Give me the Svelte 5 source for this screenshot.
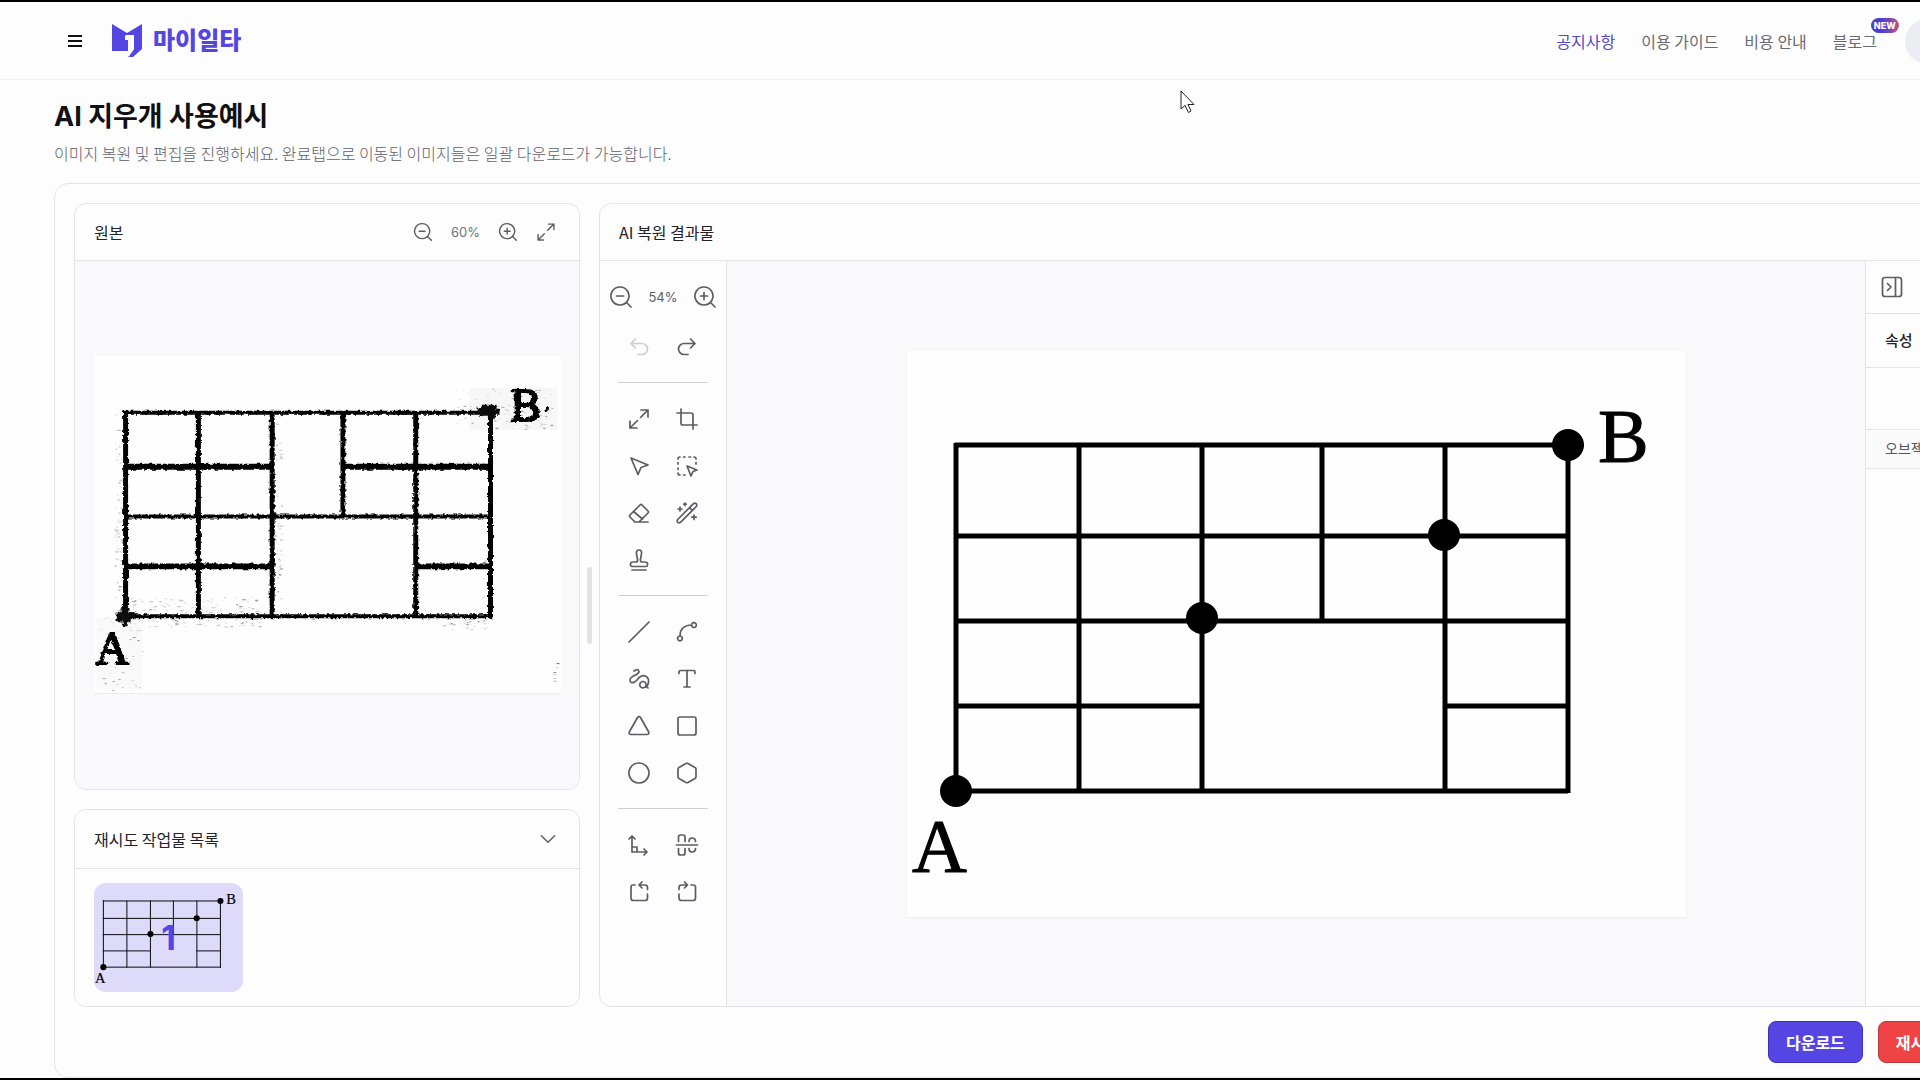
<script lang="ts">
	type Tool = { name: string; paths: string; label: string; disabled?: boolean };

	let sourceZoom = $state(60);
	let resultZoom = $state(54);
	let activeTool = $state('');

	const tools: (Tool | null)[][] = [
		[
			{
				name: 'undo',
				label: '실행 취소',
				disabled: true,
				paths: 'M8.5 4 L4 8.5 L8.5 13 M4 8.5 H15 A5 5 0 0 1 15 19.5 H11'
			},
			{
				name: 'redo',
				label: '다시 실행',
				paths: 'M15.5 4 L20 8.5 L15.5 13 M20 8.5 H9 A5 5 0 0 0 9 19.5 H13'
			}
		],
		[
			{ name: 'resize', label: '크기 조절', paths: 'M14 3 H21 V10 M21 3 L13.5 10.5 M3 14 V21 H10 M3 21 L10.5 13.5' },
			{ name: 'crop', label: '자르기', paths: 'M6 2 V16 Q6 18 8 18 H22 M2 6 H16 Q18 6 18 8 V22' },
			{ name: 'select', label: '선택', paths: 'M4 4 L21 11 L14 13.5 L11 20.5 Z' },
			{
				name: 'area',
				label: '영역 선택',
				paths:
					'M3 5 Q3 3 5 3 M8.5 3 H10 M14 3 H15.5 M19 3 Q21 3 21 5 M21 8.5 V10 M3 8.5 V10 M3 14 V15.5 M3 19 Q3 21 5 21 M8.5 21 H10 M12 12 L22 16 L18 17.5 L16 22 Z'
			},
			{
				name: 'eraser',
				label: '지우개',
				paths: 'M8 21 L3 16 Q2 15 3 14 L13 4 Q14 3 15 4 L21 10 Q22 11 21 12 L12 21 H7.5 M12 21 H21 M6.5 10.5 L15.5 18'
			},
			{
				name: 'wand',
				label: '요술봉',
				paths:
					'M2.7 18.5 L18.5 2.7 Q20 1.7 21.3 2.7 Q22.3 4 21.3 5.5 L5.5 21.3 Q4 22.3 2.7 21.3 Q1.7 20 2.7 18.5 M14.5 6.7 L17.3 9.5 M5 6 V10 M3 8 H7 M10 2 V4.5 M8.8 3.2 H11.2 M19 14 V18.5 M16.8 16.2 H21.2'
			},
			{
				name: 'stamp',
				label: '도장',
				paths:
					'M5 22 H19 M5 18.5 Q3.5 18.5 3.5 17 V16 Q3.5 14 6 14 H9 Q11 14 10.5 11 L9.5 6 Q9 2 12 2 Q15 2 14.5 6 L13.5 11 Q13 14 15 14 H18 Q20.5 14 20.5 16 V17 Q20.5 18.5 19 18.5 Z'
			},
			null
		],
		[
			{ name: 'line', label: '직선', paths: 'M2 22 L22 2' },
			{
				name: 'curve',
				label: '곡선',
				paths: 'M5 16 Q5 5.5 16.5 5 M5 16 A2.4 2.4 0 1 1 4.9 16 M19 2.7 A2.4 2.4 0 1 1 18.9 2.7'
			},
			{
				name: 'free',
				label: '자유곡선',
				paths:
					'M7 4 Q11 1 12 4.5 C12.5 8 3 8.5 3 13 C3 17 7.5 16 10 13 C13 8.5 17 7.5 20 10 C23 13 21.5 20 17 20.5 M16 14.5 A3.2 3.2 0 1 1 15.9 14.5 M20 20 L21 21'
			},
			{ name: 'text', label: '텍스트', paths: 'M4 6.5 V5 Q4 3.5 5.5 3.5 H18.5 Q20 3.5 20 5 V6.5 M12 3.5 V20 M9 20 H15' },
			{ name: 'triangle', label: '삼각형', paths: 'M10.5 3.5 Q12 1.8 13.5 3.5 L21.7 18 Q22.4 20.5 20 20.5 H4 Q1.6 20.5 2.3 18 Z' },
			{ name: 'rect', label: '사각형', paths: 'M5 3 H19 Q21 3 21 5 V19 Q21 21 19 21 H5 Q3 21 3 19 V5 Q3 3 5 3' },
			{ name: 'circle', label: '원', paths: 'M12 2 A10 10 0 1 1 11.9 2' },
			{ name: 'hexagon', label: '육각형', paths: 'M11 2.5 Q12 2 13 2.5 L20 6.5 Q21 7 21 8 V16 Q21 17 20 17.5 L13 21.5 Q12 22 11 21.5 L4 17.5 Q3 17 3 16 V8 Q3 7 4 6.5 Z' }
		],
		[
			{ name: 'axis', label: '직각', paths: 'M5 3 V19 H20 M2 6 L5 3 L8 6 M17 16 L20 19 L17 22 M5 14 H10 V19' },
			{
				name: 'mirror',
				label: '대칭',
				paths:
					'M1.5 12 H22.5 M3.5 8.5 V4 Q3.5 2 5.5 2 H8 Q10 2 10 4 V8.5 M14 8.5 Q14 5 17 5 Q20.5 5 20.5 8.5 M3.5 15.5 V20 Q3.5 22 5.5 22 H8 Q10 22 10 20 V15.5 M14 15.5 Q14 19 17 19 Q20.5 19 20.5 15.5'
			},
			{
				name: 'rotate-left',
				label: '왼쪽 회전',
				paths: 'M8 5 H6 Q4 5 4 7 V18 Q4 20.5 6.5 20.5 H18 Q20.5 20.5 20.5 18 V14 M12 5 H18 Q20.5 5 20.5 7.5 V9.5 M15 2 L12 5 L15 8'
			},
			{
				name: 'rotate-right',
				label: '오른쪽 회전',
				paths: 'M16 5 H18 Q20.5 5 20.5 7 V18 Q20.5 20.5 18 20.5 H6.5 Q4 20.5 4 18 V14 M12 5 H6.5 Q4 5 4 7.5 V9.5 M9.5 2 L12.5 5 L9.5 8'
			}
		]
	];

	const gridLines =
		'M48 94 H661 M48 185 H661 M48 270 H661 M48 355 H295 M537 355 H661 M48 440 H661 M49 92 V442 M172 94 V440 M295 94 V440 M415 94 V270 M538 94 V440 M661 94 V442';
	const gridDots = [
		[661, 94],
		[537, 184],
		[295, 267],
		[49, 440]
	];

	// leftover speckles around the scanned lines: [x, y, width, height, count]
	const zones = [
		[20, 58, 10, 200, 110],
		[360, 32, 100, 42, 90],
		[34, 242, 132, 16, 90],
		[40, 264, 130, 8, 50],
		[350, 264, 50, 10, 30],
		[6, 260, 42, 76, 60],
		[180, 58, 7, 200, 60],
		[328, 106, 68, 8, 30],
		[458, 308, 7, 26, 10],
		[388, 200, 6, 50, 14]
	];
	let seed = 7;
	function random() {
		seed = (seed * 16807) % 2147483647;
		return seed / 2147483647;
	}
	const specks = zones.flatMap(([x, y, w, h, count]) =>
		Array.from({ length: count }, () => ({
			x: Math.round(x + random() * w),
			y: Math.round(y + random() * h),
			w: 1 + Math.round(random() * 2),
			opacity: 0.08 + random() * random() * 0.5
		}))
	);
</script>

{#snippet icon(paths: string, size: number)}
	<svg width={size} height={size} viewBox="0 0 24 24" aria-hidden="true">
		<path d={paths} />
	</svg>
{/snippet}

{#snippet diagram()}
	<svg class="diagram" viewBox="0 0 779 566" aria-label="격자 도형">
		<path d={gridLines} fill="none" stroke="#000" stroke-width="5" />
		{#each gridDots as [cx, cy]}<circle {cx} {cy} r="16" />{/each}
		<text x="691" y="111">B</text>
		<text x="5" y="521">A</text>
	</svg>
{/snippet}

<div class="screen">
	<div class="page">
		<header class="topbar">
			<button class="menu" aria-label="메뉴"><i></i><i></i><i></i></button>
			<a class="brand" href="/">
				<svg width="32" height="34" viewBox="0 0 32 34" aria-hidden="true">
					<path d="M1 0 L16 9 L31 0 V25 L22 33 H17 L22 25 V12 H14 V16 H17 V27 H1 Z" fill="#5546e4" />
					<path d="M14.5 12 H22 V25 L17 32" fill="none" stroke="#fff" stroke-width="2" />
				</svg>
				<span>마이일타</span>
			</a>
			<nav>
				<a class="active" href="/notice">공지사항</a>
				<a href="/guide">이용 가이드</a>
				<a href="/pricing">비용 안내</a>
				<a class="blog" href="/blog">블로그<em>NEW</em></a>
			</nav>
			<button class="avatar" aria-label="내 계정"></button>
		</header>

		<section class="heading">
			<h1>AI 지우개 사용예시</h1>
			<p>이미지 복원 및 편집을 진행하세요. 완료탭으로 이동된 이미지들은 일괄 다운로드가 가능합니다.</p>
		</section>

		<main class="board">
			<div class="workspace">
				<div class="left">
					<section class="card source">
						<div class="card-head">
							<h2>원본</h2>
							<div class="zoom">
								<button aria-label="축소" onclick={() => (sourceZoom -= 10)}
									>{@render icon('M11 2 A9 9 0 1 1 10.9 2 M17.5 17.5 L22 22 M7.5 11 H14.5', 20)}</button
								>
								<span>{sourceZoom}%</span>
								<button aria-label="확대" onclick={() => (sourceZoom += 10)}
									>{@render icon('M11 2 A9 9 0 1 1 10.9 2 M17.5 17.5 L22 22 M7.5 11 H14.5 M11 7.5 V14.5', 20)}</button
								>
								<button aria-label="화면에 맞춤"
									>{@render icon('M15 2.5 H21.5 V9 M21.5 2.5 L14 10 M2.5 15 V21.5 H9 M2.5 21.5 L10 14', 20)}</button
								>
							</div>
						</div>
						<div class="canvas">
							<svg class="scan" viewBox="0 0 467 338" aria-label="원본 이미지">
								<defs>
									<filter id="rough" x="-5%" y="-5%" width="110%" height="110%">
										<feTurbulence type="fractalNoise" baseFrequency="0.3" numOctaves="2" seed="4" />
										<feDisplacementMap in="SourceGraphic" scale="4" xChannelSelector="R" yChannelSelector="G" />
									</filter>
								</defs>
								<rect x="376" y="32" width="88" height="42" fill="#f7f7f7" />
								<rect x="2" y="262" width="46" height="72" fill="#f9f9f9" />
								<g filter="url(#rough)">
									<path
										d="M29 57 H397 M31 161 H397 M29 261 H397"
										fill="none"
										stroke="#000"
										stroke-width="4"
									/>
									<path
										d="M31 111 H178 M249 111 H397 M31 211 H178 M322 211 H397"
										fill="none"
										stroke="#000"
										stroke-width="6"
									/>
									<path
										d="M31 56 V261 M104 57 V261 M178 57 V261 M249 57 V161 M322 57 V261 M397 57 V263"
										fill="none"
										stroke="#000"
										stroke-width="5"
									/>
									<path
										d="M383 52 H388 V49 H403 V53 H406 V59 H402 V63 H397 V60 H386 V56 H383 Z M22 257 H26 V253 H35 V257 H40 V264 H36 V267 H33 V271 H28 V266 H22 Z"
										fill="#111"
									/>
									<path d="M451 56 L455 52" stroke="#000" stroke-width="3" />
									<text x="417" y="65">B</text>
									<text x="1" y="309">A</text>
								</g>
								{#each specks as s}<rect x={s.x} y={s.y} width={s.w} height="1" opacity={s.opacity} />{/each}
							</svg>
						</div>
					</section>

					<section class="card retries">
						<div class="card-head">
							<h2>재시도 작업물 목록</h2>
							<button aria-label="접기">{@render icon('M4 8 L12 16 L20 8', 20)}</button>
						</div>
						<div class="thumbs">
							<button class="thumb" aria-label="작업물 1">{@render diagram()}<b>1</b></button>
						</div>
					</section>
				</div>

				<div class="splitter"><span></span></div>

				<section class="card result">
					<div class="card-head"><h2>AI 복원 결과물</h2></div>
					<div class="editor">
						<aside class="tools">
							<div class="tool-zoom">
								<button aria-label="축소" onclick={() => (resultZoom -= 1)}
									>{@render icon('M11 2 A9 9 0 1 1 10.9 2 M17.5 17.5 L22 22 M7.5 11 H14.5', 24)}</button
								>
								<span>{resultZoom}%</span>
								<button aria-label="확대" onclick={() => (resultZoom += 1)}
									>{@render icon('M11 2 A9 9 0 1 1 10.9 2 M17.5 17.5 L22 22 M7.5 11 H14.5 M11 7.5 V14.5', 24)}</button
								>
							</div>
							{#each tools as group}
								<div class="group">
									{#each group as tool}
										{#if tool}
											<button
												aria-label={tool.label}
												disabled={tool.disabled}
												class:on={activeTool === tool.name}
												onclick={() => (activeTool = tool.name)}>{@render icon(tool.paths, 24)}</button
											>
										{/if}
									{/each}
								</div>
							{/each}
						</aside>
						<div class="canvas">
							<div class="paper">{@render diagram()}</div>
						</div>
						<aside class="props">
							<div class="toggle">
								<button aria-label="패널 접기"
									>{@render icon('M5 2.5 H19 Q21.5 2.5 21.5 5 V19 Q21.5 21.5 19 21.5 H5 Q2.5 21.5 2.5 19 V5 Q2.5 2.5 5 2.5 M15.5 2.5 V21.5 M7.5 8.5 L11 12 L7.5 15.5', 24)}</button
								>
							</div>
							<h3>속성</h3>
							<div class="blank"></div>
							<h4>오브젝트</h4>
						</aside>
					</div>
				</section>
			</div>

			<footer>
				<button class="download">다운로드</button>
				<button class="retry">재시도</button>
			</footer>
		</main>
	</div>

	<svg class="cursor" width="16" height="24" viewBox="0 0 16 24" aria-hidden="true">
		<path d="M1 1 V19 L5 15.5 L8.5 22.5 L11 21 L8 14.5 H14 Z" fill="#fff" stroke="#222" />
	</svg>
</div>

<style>
	:global(*) {
		box-sizing: border-box;
	}
	:global(body) {
		margin: 0;
		background: #fdfdfd;
		color: #222228;
		font-family: Inter, 'Noto Sans CJK KR', sans-serif;
		font-size: 16px;
	}
	.screen {
		position: relative;
		min-height: 100vh;
		overflow: hidden;
		border-top: 2px solid #000;
		border-bottom: 2px solid #000;
		display: flex;
	}
	/* the page is wider than the window and runs off its right edge */
	.page {
		flex: none;
		width: calc(100% + 112px);
		display: flex;
		flex-direction: column;
	}
	h1,
	h2,
	h3,
	h4,
	p {
		margin: 0;
	}
	a {
		color: inherit;
		text-decoration: none;
	}
	button {
		font: inherit;
		color: inherit;
		border: 0;
		padding: 0;
		background: none;
		cursor: pointer;
		display: flex;
		align-items: center;
		justify-content: center;
	}
	button svg path {
		fill: none;
		stroke: #5c5c64;
		stroke-width: 1.7;
		stroke-linecap: round;
		stroke-linejoin: round;
	}
	button:disabled svg path {
		stroke: #cdcdd2;
	}

	.topbar {
		height: 78px;
		padding: 1px 82px 0 68px;
		display: flex;
		align-items: center;
		border-bottom: 1px solid #f0f0f3;
	}
	.menu {
		width: 14px;
		flex-direction: column;
		gap: 3px;
	}
	.menu i {
		width: 14px;
		height: 2px;
		background: #111;
	}
	.brand {
		display: flex;
		align-items: center;
		gap: 10px;
		margin-left: 29px;
		color: #5546e4;
		font-size: 24px;
		font-weight: 800;
		line-height: 34px;
	}
	nav {
		display: flex;
		gap: 26px;
		margin-left: auto;
		margin-right: 28px;
		color: #6b6b73;
		font-family: 'Noto Sans CJK KR', sans-serif;
		line-height: 22px;
	}
	nav .active {
		color: #5546c8;
	}
	.blog {
		position: relative;
	}
	.blog em {
		position: absolute;
		left: 38px;
		top: -12px;
		width: 28px;
		height: 15px;
		border-radius: 8px;
		background: linear-gradient(90deg, #4c3fd0 40%, #c0557f);
		color: #fff;
		font: 800 9px/15px Inter, sans-serif;
		text-align: center;
	}
	.avatar {
		width: 45px;
		height: 45px;
		border-radius: 50%;
		background: #ececf4;
	}

	.heading {
		padding: 18px 54px 0;
		height: 103px;
	}
	.heading h1 {
		font-size: 27px;
		font-weight: 700;
		line-height: 38px;
		color: #111;
	}
	.heading p {
		font-family: 'Noto Sans CJK KR', sans-serif;
		font-size: 16px;
		font-weight: 300;
		line-height: 34px;
		color: #60606a;
	}

	.board {
		flex: 1;
		margin: 0 54px;
		padding: 19px 19px 14px;
		border: 1px solid #e6e6e9;
		border-radius: 14px;
		display: flex;
		flex-direction: column;
		gap: 14px;
	}
	.workspace {
		flex: 1;
		display: grid;
		grid-template-columns: 506px 19px 1fr;
	}
	.left {
		display: flex;
		flex-direction: column;
		gap: 19px;
	}
	.card {
		display: flex;
		flex-direction: column;
		border: 1px solid #e4e4e7;
		border-radius: 12px;
		overflow: hidden;
	}
	.card-head {
		height: 57px;
		padding: 0 23px 0 19px;
		display: flex;
		align-items: center;
		justify-content: space-between;
		border-bottom: 1px solid #e4e4e7;
	}
	.card-head h2 {
		font-family: 'Noto Sans CJK KR', sans-serif;
		font-size: 16px;
		font-weight: 400;
		line-height: 24px;
	}
	.source {
		flex: 1;
	}
	.zoom {
		display: flex;
		align-items: center;
		gap: 18px;
		font-size: 13px;
		color: #71717a;
	}
	.canvas {
		flex: 1;
		display: flex;
		align-items: center;
		justify-content: center;
		background: #f9f9fb;
	}
	.scan {
		width: 467px;
		height: 338px;
		background: #fefefe;
		border-bottom: 1px solid #ececf0;
	}
	.scan text {
		font: 46px 'Liberation Serif', serif;
		stroke: #000;
		stroke-width: 2;
	}
	.retries .card-head {
		height: 59px;
		padding-right: 21px;
	}
	.thumbs {
		padding: 14px 19px;
	}
	.thumb {
		position: relative;
		width: 149px;
		height: 109px;
		border-radius: 12px;
		background: #dddafa;
	}
	.thumb b {
		position: absolute;
		inset: 0;
		color: #5546e4;
		font-size: 34px;
		line-height: 109px;
	}
	.diagram {
		display: block;
		width: 100%;
	}
	.diagram text {
		font: 76px 'Liberation Serif', serif;
		stroke: #000;
		stroke-width: 1;
	}
	.thumb .diagram path {
		stroke: #000;
		stroke-width: 5;
	}
	.splitter {
		display: flex;
		align-items: center;
		justify-content: center;
	}
	.splitter span {
		width: 5px;
		height: 77px;
		border-radius: 3px;
		background: #e2e2e6;
	}

	.editor {
		flex: 1;
		display: flex;
	}
	.tools {
		width: 127px;
		padding: 10px 0;
		border-right: 1px solid #e4e4e7;
	}
	.tool-zoom {
		height: 52px;
		display: flex;
		align-items: center;
		justify-content: center;
		gap: 15px;
		font-size: 13px;
		color: #5c5c64;
	}
	.group {
		display: grid;
		grid-template-columns: 48px 48px;
		grid-auto-rows: 47px;
		margin: 0 18px;
		justify-content: center;
	}
	.group + .group {
		margin-top: 12px;
		padding-top: 12px;
		border-top: 1px solid #d0d0d4;
	}
	.group .on {
		background: #efedfd;
		border-radius: 8px;
	}
	.paper {
		width: 779px;
		background: #fefefe;
		box-shadow: 0 1px 2px #ececf0;
	}
	.props {
		width: 92px;
		border-left: 1px solid #e4e4e7;
	}
	.props > * {
		padding-left: 19px;
		border-bottom: 1px solid #e4e4e7;
	}
	.toggle {
		height: 53px;
		padding-left: 14px;
		display: flex;
	}
	.props h3 {
		font-size: 15px;
		font-weight: 500;
		line-height: 53px;
	}
	.blank {
		height: 62px;
	}
	.props h4 {
		font-size: 14px;
		font-weight: 400;
		line-height: 38px;
		background: #fafafb;
		color: #55555d;
	}

	footer {
		display: flex;
		justify-content: flex-end;
		gap: 15px;
	}
	footer button {
		height: 42px;
		padding: 0 17px;
		border: 1px solid #3d2fb8;
		border-radius: 8px;
		background: #5546e4;
		color: #fff;
		font-weight: 700;
	}
	footer .retry {
		border-color: #b8393c;
		background: #ef4345;
	}
	.cursor {
		position: absolute;
		left: 1180px;
		top: 88px;
	}
</style>
